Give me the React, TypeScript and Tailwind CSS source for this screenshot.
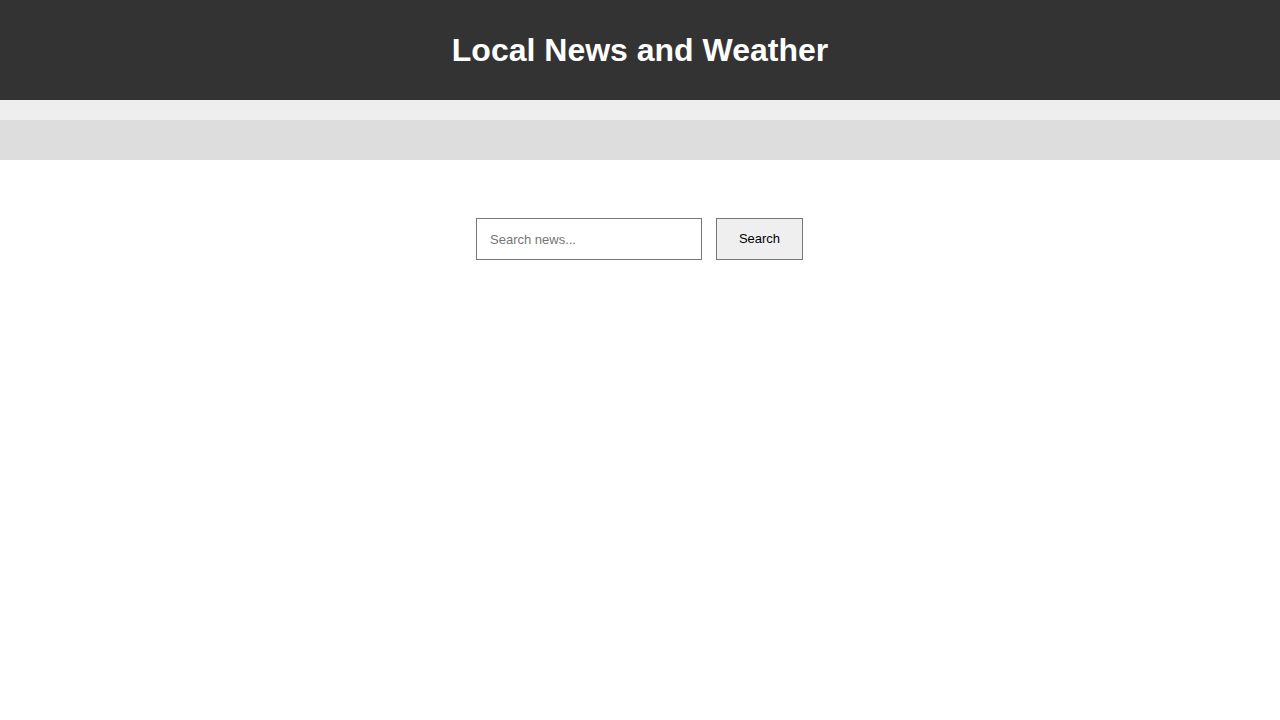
export default function App() {
  return (
    <div className="min-h-screen bg-white font-['Liberation_Sans',Arial,sans-serif] text-black">
      <header className="bg-[#333333] py-[30px] text-white">
        <h1 className="text-center text-[32px] font-bold leading-[40px]">Local News and Weather</h1>
      </header>
      <nav className="h-[20px] bg-[#eeeeee]"></nav>
      <div className="h-[40px] bg-[#dddddd]"></div>
      <main className="pt-[40px]">
        <section className="py-[18px] pb-[20px]">
          <form className="flex justify-center gap-[14px]" onSubmit={(e) => e.preventDefault()}>
            <input
              type="text"
              placeholder="Search news..."
              className="ml-[-1px] h-[42px] w-[226px] border border-[#767676] bg-white px-[13px] text-[13px] text-black outline-none placeholder:text-[#757575]"
            />
            <button
              type="submit"
              className="h-[42px] w-[87px] border border-[#767676] bg-[#efefef] text-[13px] text-black"
            >
              Search
            </button>
          </form>
        </section>
      </main>
    </div>
  );
}
